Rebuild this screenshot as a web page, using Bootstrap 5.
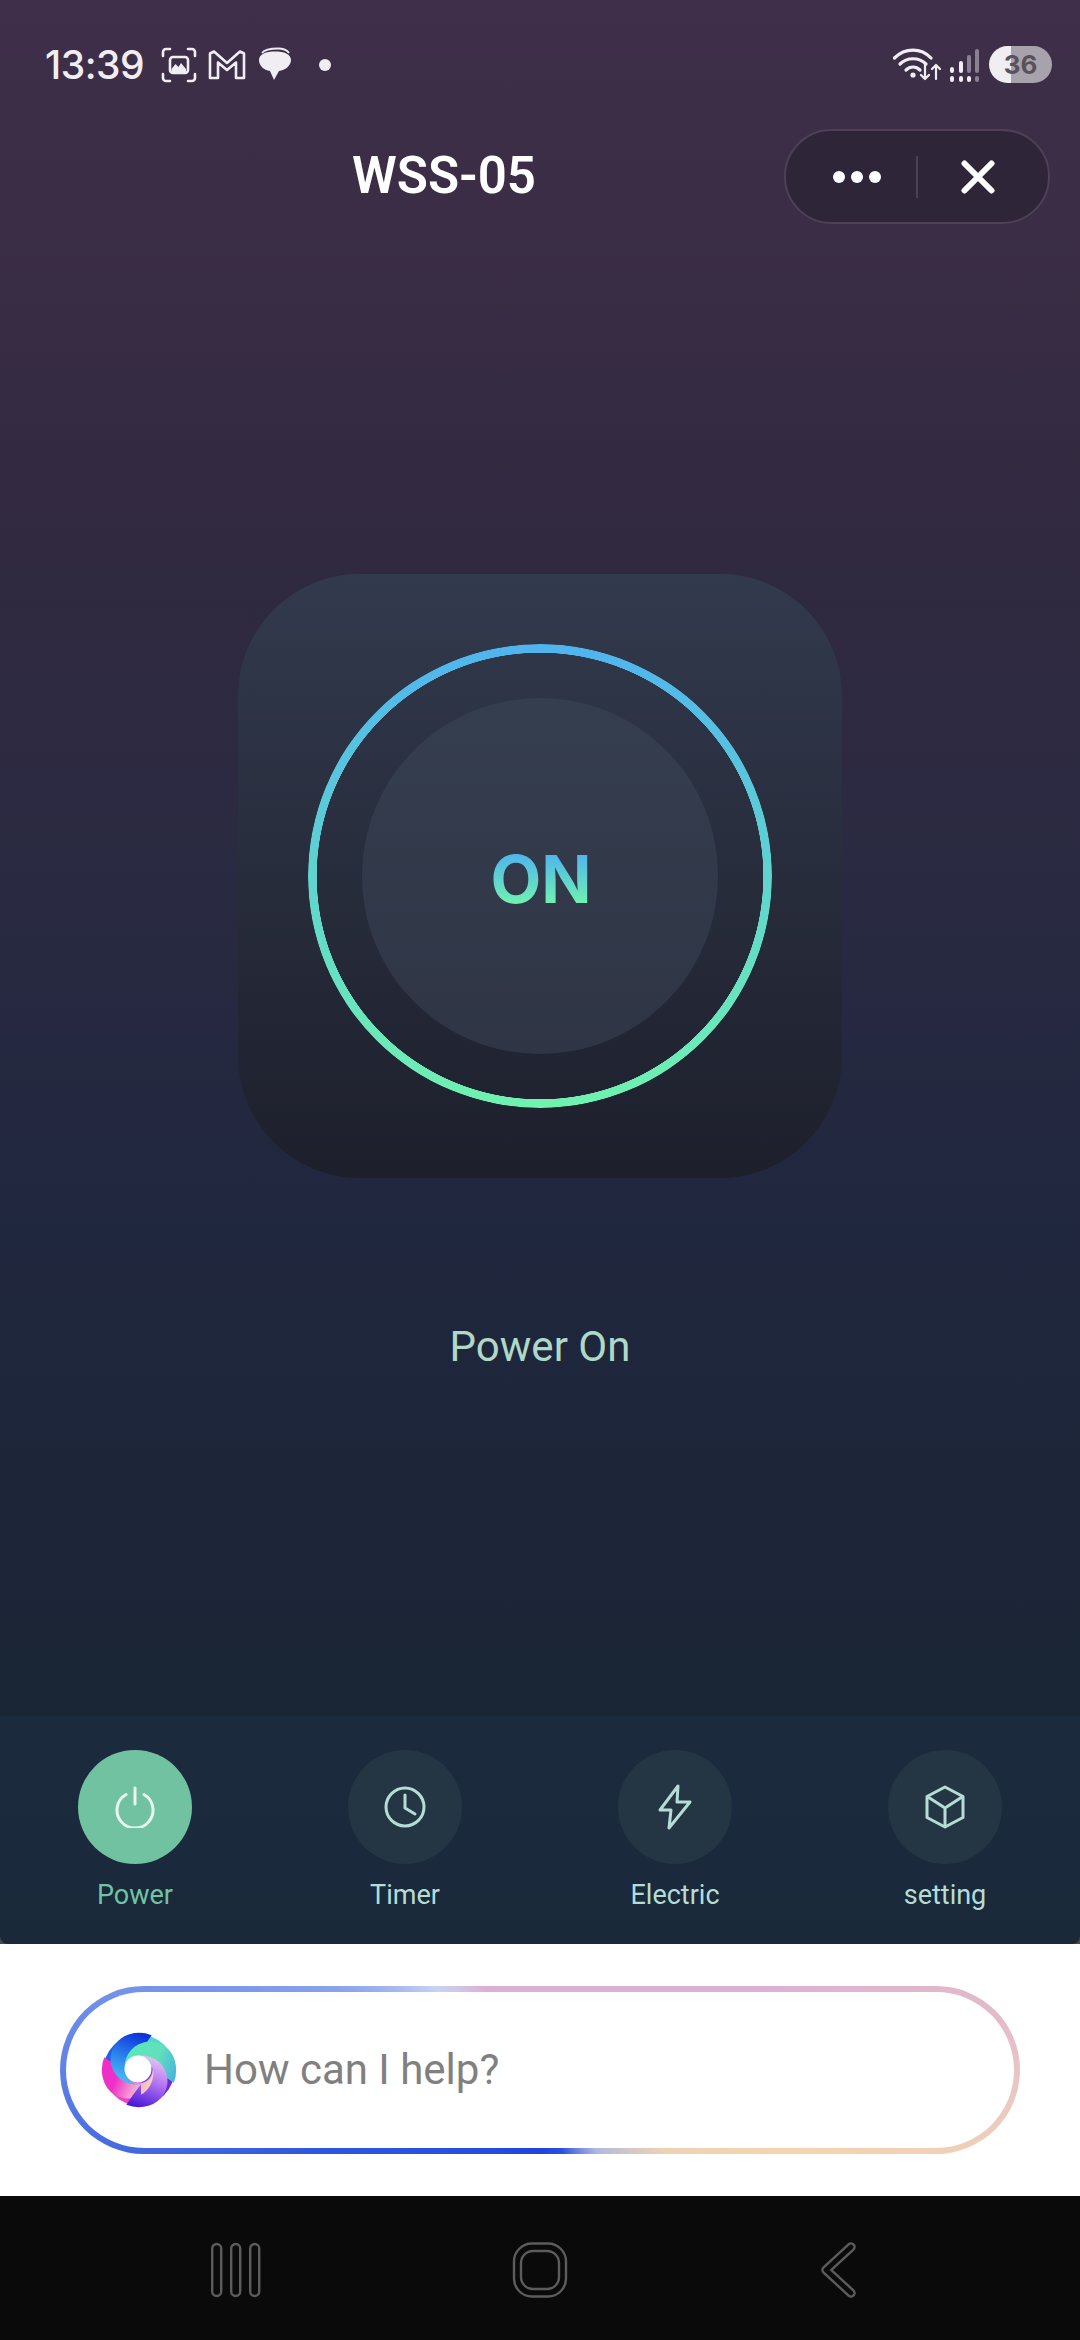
<!DOCTYPE html>
<html lang="en">
<head>
<meta charset="utf-8">
<title>WSS-05</title>
<link href="https://cdn.jsdelivr.net/npm/bootstrap@5.3.0/dist/css/bootstrap.min.css" rel="stylesheet">
<style>
html,body{margin:0;background:#0a0a0a;}
body{font-family:Roboto,"Liberation Sans",sans-serif;}
.phone{width:1080px;height:2340px;overflow:hidden;background:#4a4a4a;}
.stage{height:1716px;background:linear-gradient(180deg,#3f2f4a 0,#3a2d45 240px,#30293f 560px,#2a2a42 860px,#20273e 1200px,#1a2535 1716px);}
.statusrow{height:129px;padding:0 28px 0 45px;}
.clock{font-family:Inter,Roboto,sans-serif;font-size:39px;font-weight:500;color:#f1eef3;letter-spacing:-.5px;line-height:1;margin-right:17px;}
.batt{width:63px;height:37px;border-radius:19px;background:linear-gradient(90deg,#f0eef2 0,#f0eef2 35%,#a8a2ac 35%,#a8a2ac 100%);color:#57525c;font-family:Inter,Roboto,sans-serif;font-size:26px;font-weight:700;line-height:37px;text-align:center;}
.headrow{height:95px;padding-right:30px;}
.apptitle{flex:1;padding-left:104px;text-align:center;color:#fff;font-size:51px;font-weight:600;line-height:1;margin:0 0 3px;}
.capsule{width:266px;height:95px;border-radius:48px;background:#2f2539;border:2px solid #4d4057;}
.capsule-cell{width:132px;height:100%;}
.capsule-cell.lead-cell{padding-left:12px;}
.capsule-cell.tail-cell{padding-right:10px;}
.capsule-sep{width:2px;height:42px;background:#4d4057;}
.dev-card{width:604px;height:604px;margin:350px auto 0;border-radius:122px;background:linear-gradient(180deg,#323a4d 0,#1d1f2b 100%);}
.ring{width:464px;height:464px;border-radius:50%;position:relative;}
.ring::before{content:"";position:absolute;inset:0;border-radius:50%;background:linear-gradient(180deg,#50b4ee,#70f2b0);-webkit-mask:radial-gradient(closest-side,transparent calc(100% - 9px),#000 calc(100% - 8.5px));mask:radial-gradient(closest-side,transparent calc(100% - 9px),#000 calc(100% - 8.5px));}
.knob{width:356px;height:356px;border-radius:50%;background:linear-gradient(180deg,#353e4f,#2f3545);padding-top:5px;padding-left:2px;}
.ontext{font-family:Inter,Roboto,sans-serif;font-size:66px;font-weight:700;line-height:1;background:linear-gradient(180deg,#50b4ee 12%,#70f2b0 88%);-webkit-background-clip:text;background-clip:text;color:transparent;}
.statetext{margin:145px 0 0;text-align:center;color:#b0d8c8;font-size:42px;line-height:48px;}
.tabbar{height:228px;padding-top:34px;background:linear-gradient(180deg,#1c2a3e 0,#19293a 100%);border-radius:0 0 8px 8px;}
.tabdot{width:114px;height:114px;border-radius:50%;background:#243644;}
.tabdot.active{background:#70c2a0;}
.tablabel{margin-top:15px;font-size:27px;line-height:32px;color:#b5dcd5;}
.tablabel.active{color:#6fc4a2;}
.helper{height:252px;padding:42px 60px;background:#fff;}
.pill{height:168px;border:6px solid transparent;border-radius:84px;padding-left:34px;background:linear-gradient(#fff,#fff) padding-box,conic-gradient(from 0deg at 50% 50%,#dcb0d4 0deg,#dcb0d4 70deg,#e4bcc8 84deg,#e8c8c4 92deg,#f3d5ae 106deg,#eed2b4 122deg,#b0b8e0 145deg,#2a50dc 165deg,#1d45dc 180deg,#2d55de 250deg,#5f82e6 270deg,#8aa3ec 292deg,#c8d3f4 308deg,#dcb0d4 326deg,#dcb0d4 360deg) border-box;}
.askinput{margin-left:26px;font-size:42px;color:#808080;line-height:1;}
.sysnav{height:144px;background:#0a0a0a;padding-top:46px;}
.navcell{width:60px;height:56px;}
</style>
</head>
<body>
<div class="phone d-flex flex-column">
  <div class="stage d-flex flex-column">
    <div class="statusrow d-flex align-items-center">
      <span class="clock">13:39</span>
      <svg width="36" height="36" viewBox="0 0 36 36" fill="none" stroke="#f1eef3" stroke-width="2.6" stroke-linecap="round"><path d="M2 9V5a3 3 0 0 1 3-3h4M27 2h4a3 3 0 0 1 3 3v4M34 27v4a3 3 0 0 1-3 3h-4M9 34H5a3 3 0 0 1-3-3v-4"/><rect x="9" y="10" width="18" height="16" rx="3"/><path d="M10.500 22l4-5 3 3 2.500-4 5 6v3h-14.500z" fill="#f1eef3" stroke="none"/></svg>
      <svg width="38" height="30" viewBox="0 0 38 30" fill="none" stroke="#f1eef3" stroke-width="2.6" stroke-linejoin="round" style="margin-left:11px"><path d="M2 3.500 6 1.500 19 13 32 1.500 36 3.500V28H28V12.500L19 20 10 12.500V28H2Z"/></svg>
      <svg width="34" height="36" viewBox="0 0 34 36" style="margin-left:12px"><path d="M4 6C7 2 14 1.500 20 1.500S29 3 31 6" fill="none" stroke="#f1eef3" stroke-width="1.800"/><path d="M1 13C1 7 8 4.500 17 4.500S33 7 33 13 27 23 21 24L16 33 12 24C6 23 1 19 1 13Z" fill="#f1eef3"/></svg>
      <svg width="12" height="12" viewBox="0 0 12 12" style="margin-left:27px"><circle cx="6" cy="6" r="6" fill="#f1eef3"/></svg>
      <div class="ms-auto d-flex align-items-center">
        <svg width="48" height="34" viewBox="0 0 48 34" fill="none" stroke="#f1eef3" stroke-linecap="round" stroke-width="3.200"><path d="M1.500 10C12-.5 28-.5 38 10"/><path d="M7 16C14 9 26 9 33 16"/><path d="M13 22C17 18 23 18 27 22"/><circle cx="20" cy="27" r="2.600" fill="#f1eef3" stroke="none"/><path d="M32 16V31M28 27l4 4 4-4M43 31V17M39 21l4-4 4 4" stroke-width="2.200" stroke-linejoin="round"/></svg>
        <svg width="32" height="34" viewBox="0 0 32 34" class="ms-2 me-2"><g fill="#f1eef3"><rect x="1" y="19" width="4" height="6" rx="2"/><rect x="1" y="28" width="4" height="6" rx="2"/><rect x="10" y="13" width="4" height="12" rx="2"/><rect x="10" y="28" width="4" height="6" rx="2"/><rect x="18" y="28" width="4" height="6" rx="2"/></g><g fill="#8a7f93"><rect x="18" y="7" width="4" height="18" rx="2"/><rect x="26" y="1" width="4" height="24" rx="2"/><rect x="26" y="28" width="4" height="6" rx="2"/></g></svg>
        <div class="batt">36</div>
      </div>
    </div>
    <div class="headrow d-flex align-items-center">
      <h1 class="apptitle">WSS-05</h1>
      <div class="capsule d-flex align-items-center">
        <div class="capsule-cell lead-cell d-flex align-items-center justify-content-center">
          <svg width="48" height="12" viewBox="0 0 48 12" fill="#fff"><circle cx="6" cy="6" r="6"/><circle cx="24" cy="6" r="6"/><circle cx="42" cy="6" r="6"/></svg>
        </div>
        <div class="capsule-sep"></div>
        <div class="capsule-cell tail-cell d-flex align-items-center justify-content-center">
          <svg width="34" height="34" viewBox="0 0 34 34" stroke="#fff" stroke-width="6" stroke-linecap="round"><path d="M3.500 3.500 30.500 30.500M30.500 3.500 3.500 30.500"/></svg>
        </div>
      </div>
    </div>
    <div class="dev-card d-flex align-items-center justify-content-center">
      <div class="ring d-flex align-items-center justify-content-center">
        <div class="knob d-flex align-items-center justify-content-center"><span class="ontext">ON</span></div>
      </div>
    </div>
    <p class="statetext">Power On</p>
  </div>

  <div class="tabbar">
    <div class="row g-0">
      <div class="col-3 d-flex flex-column align-items-center">
        <div class="tabdot active d-flex align-items-center justify-content-center">
          <svg width="42" height="42" viewBox="0 0 42 42" fill="none" stroke="#e9f7f0" stroke-width="3" stroke-linecap="round"><path d="M21 2V18"/><path d="M12 8.500A18 18 0 1 0 30 8.500"/></svg>
        </div>
        <div class="tablabel active">Power</div>
      </div>
      <div class="col-3 d-flex flex-column align-items-center">
        <div class="tabdot d-flex align-items-center justify-content-center">
          <svg width="42" height="42" viewBox="0 0 42 42" fill="none" stroke="#b5dcd5" stroke-width="3" stroke-linecap="round" stroke-linejoin="round"><circle cx="21" cy="21" r="19"/><path d="M21 9V22L31 28"/></svg>
        </div>
        <div class="tablabel">Timer</div>
      </div>
      <div class="col-3 d-flex flex-column align-items-center">
        <div class="tabdot d-flex align-items-center justify-content-center">
          <svg width="36" height="48" viewBox="0 0 36 48" fill="none" stroke="#b5dcd5" stroke-width="3" stroke-linejoin="round"><path d="M21 3 3 27H14L12 45 33 19H20Z"/></svg>
        </div>
        <div class="tablabel">Electric</div>
      </div>
      <div class="col-3 d-flex flex-column align-items-center">
        <div class="tabdot d-flex align-items-center justify-content-center">
          <svg width="42" height="44" viewBox="0 0 42 44" fill="none" stroke="#b5dcd5" stroke-width="3" stroke-linejoin="round" stroke-linecap="round"><path d="M21 2 39 11.500V32.500L21 42 3 32.500V11.500Z"/><path d="M4 12 21 23 38 12M21 23V41"/></svg>
        </div>
        <div class="tablabel">setting</div>
      </div>
    </div>
  </div>

  <div class="helper">
    <div class="pill d-flex align-items-center">
      <svg width="78" height="78" viewBox="-39 -39 78 78">
        <defs>
          <linearGradient id="gb" gradientUnits="userSpaceOnUse" x1="14" y1="14" x2="-30" y2="-18"><stop offset="0" stop-color="#4cc4f2"/><stop offset=".5" stop-color="#2a80ec"/><stop offset="1" stop-color="#0c2fdc"/></linearGradient>
          <linearGradient id="gt" gradientUnits="userSpaceOnUse" x1="14" y1="14" x2="-30" y2="-18"><stop offset="0" stop-color="#58e8b8"/><stop offset=".6" stop-color="#62e0bc"/><stop offset="1" stop-color="#48b8d8"/></linearGradient>
          <linearGradient id="gv" gradientUnits="userSpaceOnUse" x1="14" y1="14" x2="-30" y2="-18"><stop offset="0" stop-color="#ecc8f4"/><stop offset=".5" stop-color="#b070f0"/><stop offset="1" stop-color="#4a18d8"/></linearGradient>
          <linearGradient id="gp" gradientUnits="userSpaceOnUse" x1="14" y1="14" x2="-30" y2="-18"><stop offset="0" stop-color="#f8e0b4"/><stop offset=".35" stop-color="#f49cd0"/><stop offset=".7" stop-color="#ee30c8"/></linearGradient>
          <path id="blade" d="M14 0A25.500 25.500 0 0 1-37 0A34 34 0 0 1-30.300-21.200Q-22-12-13 0A13 13 0 0 0 14 0Z"/>
          <clipPath id="tipclip"><rect x="2" y="-8" width="37" height="47"/></clipPath>
        </defs>
        <g transform="rotate(-12)">
          <path d="M0 0V-35.500A35.500 35.500 0 0 1 35.500 0Z" fill="#50d8cc"/>
          <path d="M0 0H35.500A35.500 35.500 0 0 1 0 35.500Z" fill="#6a28e0"/>
          <path d="M0 0V35.500A35.500 35.500 0 0 1-35.500 0Z" fill="#ee40c8"/>
          <path d="M0 0H-35.500A35.500 35.500 0 0 1 0-35.500Z" fill="#2060e6"/>
        </g>
        <use href="#blade" fill="url(#gp)" transform="rotate(-15)"/>
        <use href="#blade" fill="url(#gb)" transform="rotate(75)"/>
        <use href="#blade" fill="url(#gt)" transform="rotate(165)"/>
        <use href="#blade" fill="url(#gv)" transform="rotate(255)"/>
        <g clip-path="url(#tipclip)"><use href="#blade" fill="url(#gp)" transform="rotate(-15)"/></g>
        <circle cx="-1" cy="-1" r="13.500" fill="#fff"/>
      </svg>
      <span class="askinput">How can I help?</span>
    </div>
  </div>

  <div class="sysnav d-flex justify-content-center">
    <div class="d-flex justify-content-between" style="width:668px">
      <svg class="navcell" viewBox="0 0 60 56" fill="none" stroke="#5c5c5c" stroke-width="2.400"><rect x="6.200" y="2" width="9" height="52" rx="4.500"/><rect x="25.200" y="2" width="9" height="52" rx="4.500"/><rect x="44.200" y="2" width="9" height="52" rx="4.500"/></svg>
      <svg class="navcell" viewBox="0 0 60 56" fill="none" stroke="#5c5c5c" stroke-width="2.400"><rect x="4" y="1.500" width="52" height="53" rx="18"/><rect x="11" y="9" width="38" height="38" rx="12"/></svg>
      <svg class="navcell" viewBox="0 0 60 56" fill="none" stroke-linejoin="round" stroke-linecap="round"><path d="M37 5 12 28 37 51" stroke="#5c5c5c" stroke-width="9.500"/><path d="M37 5 12 28 37 51" stroke="#0a0a0a" stroke-width="4.700"/></svg>
    </div>
  </div>
</div>
<script src="https://cdn.jsdelivr.net/npm/bootstrap@5.3.0/dist/js/bootstrap.bundle.min.js"></script>
</body>
</html>
